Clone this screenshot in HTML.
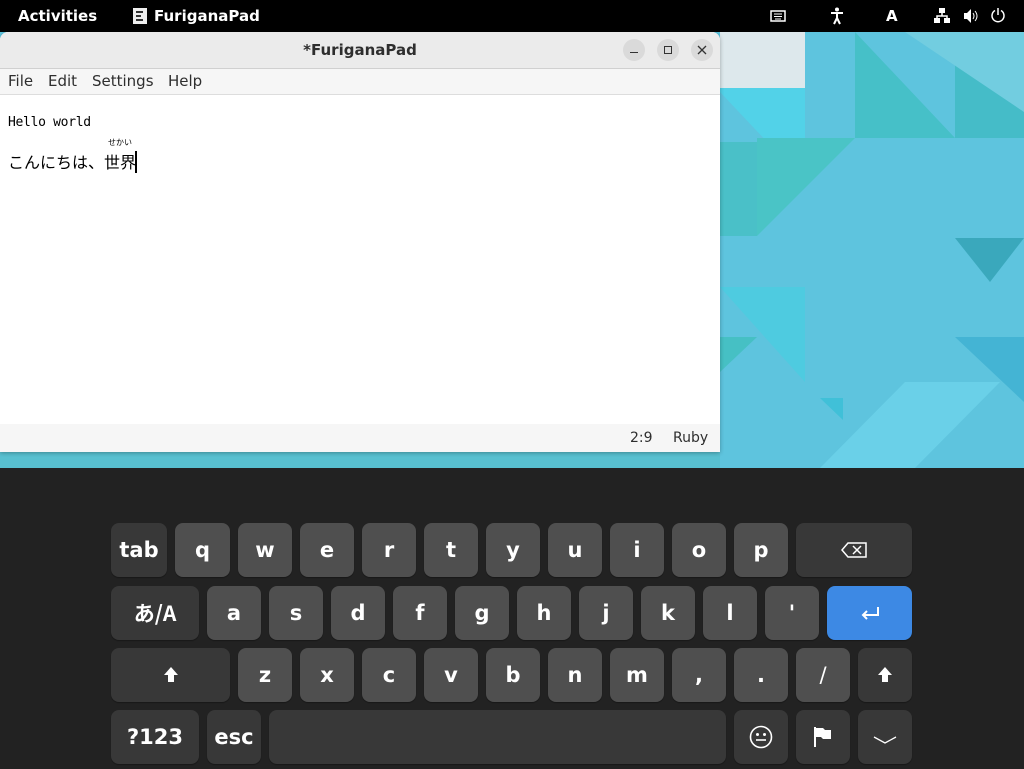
<!DOCTYPE html>
<html><head><meta charset="utf-8"><style>
*{margin:0;padding:0;box-sizing:border-box}
body{width:1024px;height:768px;overflow:hidden;background:#222;font-family:"DejaVu Sans","Liberation Sans","Noto Sans CJK JP",sans-serif;position:relative}
#top{position:absolute;left:0;top:0;width:1024px;height:32px;background:#000;color:#fff;font-weight:bold;font-size:15px}
#top span{position:absolute;top:7px}
#wall{position:absolute;left:0;top:32px;width:1024px;height:436px}
#win{position:absolute;left:0;top:32px;width:720px;height:420px;background:#fff;border-radius:8px 8px 0 0;overflow:hidden;box-shadow:0 1px 4px rgba(0,0,0,.3)}
#title{height:37px;background:#ebebeb;border-bottom:1px solid #d0d0d0;text-align:center;font-weight:bold;font-size:15px;line-height:36px;color:#2e2e2e}
.wb{position:absolute;top:7px;width:22px;height:22px;border-radius:11px;background:#dadada}
#menu{position:relative;height:26px;background:#f6f6f6;border-bottom:1px solid #ddd;font-size:15px;color:#2e2e2e;line-height:25px}
#menu span{position:absolute;top:0}
#status{position:absolute;left:0;top:392px;width:720px;height:28px;background:#f6f6f6;font-size:14px;color:#2e2e2e}
.k{position:absolute;height:54px;border-radius:8px;background:#4f4f4f;color:#fff;font-weight:bold;font-size:21px;text-align:center;line-height:54px;box-shadow:0 1px 1px rgba(0,0,0,.3)}
.s{background:#383838}
</style></head><body>
<svg id="wall" viewBox="0 0 1024 436" preserveAspectRatio="none">
<rect width="1024" height="436" fill="#5ec4de"/>
<polygon points="720,0 805,0 805,56 720,56" fill="#dde8ec"/>
<polygon points="720,56 805,56 805,150 720,60" fill="#52d2e8"/>
<polygon points="855,0 955,106 855,106" fill="#46c0c8"/>
<polygon points="955,10 1024,80 1024,106 955,106" fill="#45bcc8"/>
<polygon points="905,0 1024,0 1024,80" fill="#72cde0"/>
<polygon points="757,106 855,106 757,204" fill="#4ac4c6"/>
<polygon points="720,110 757,110 757,204 720,204" fill="#4ac0c8"/>
<polygon points="955,206 1024,206 990,250" fill="#3aa8bc"/>
<polygon points="720,255 805,255 805,350" fill="#4ecbe0"/>
<polygon points="720,305 757,305 720,340" fill="#46c0c4"/>
<polygon points="955,305 1024,305 1024,370" fill="#44b4d4"/>
<polygon points="820,436 905,350 1000,350 915,436" fill="#6ad0e8"/>
<polygon points="820,366 843,366 843,388" fill="#40c0d8"/>
<rect x="0" y="420" width="720" height="16" fill="#58c0d0"/>
</svg>
<div id="top"><span style="left:18px">Activities</span>
<svg style="position:absolute;left:133px;top:8px" width="14" height="16"><rect x="0" y="0" width="14" height="16" fill="#eee"/><path d="M3 4h7M3 8h5M3 12h7" stroke="#333" stroke-width="2"/></svg>
<span style="left:154px">FuriganaPad</span>
<svg style="position:absolute;left:770px;top:10px" width="16" height="12"><rect x="1" y="1" width="14" height="10" fill="none" stroke="#fff" stroke-width="1.5"/><path d="M4 4h8M4 6.5h8M5 9h6" stroke="#fff"/></svg>
<svg style="position:absolute;left:829px;top:7px" width="16" height="18"><circle cx="8" cy="2.5" r="2" fill="#fff"/><path d="M2 6h12M8 6v5M8 11l-3 6M8 11l3 6" stroke="#fff" stroke-width="2"/></svg>
<span style="left:886px">A</span>
<svg style="position:absolute;left:934px;top:8px" width="16" height="15"><rect x="5" y="0" width="6" height="5" fill="#fff"/><rect x="0" y="10" width="6" height="5" fill="#fff"/><rect x="10" y="10" width="6" height="5" fill="#fff"/><path d="M8 5v3M3 10V8h10v2" stroke="#fff" stroke-width="1.5" fill="none"/></svg>
<svg style="position:absolute;left:963px;top:9px" width="16" height="14"><path d="M1 4h3l4-4v14l-4-4H1z" fill="#fff"/><path d="M10 4q2 3 0 6M12 2q4 5 0 10" stroke="#fff" fill="none"/></svg>
<svg style="position:absolute;left:990px;top:7px" width="16" height="16"><path d="M5 3.5A6 6 0 1 0 11 3.5" stroke="#fff" stroke-width="1.5" fill="none"/><path d="M8 1v7" stroke="#fff" stroke-width="1.5"/></svg>
</div>
<div id="win">
<div id="title">*FuriganaPad</div>
<div class="wb" style="left:623px"><div style="position:absolute;left:7px;top:13px;width:8px;height:1px;background:#333"></div></div>
<div class="wb" style="left:657px"><div style="position:absolute;left:7px;top:7px;width:8px;height:8px;border:1px solid #333"></div></div>
<div class="wb" style="left:691px"><svg style="position:absolute;left:6px;top:6px" width="10" height="10"><path d="M1 1l8 8M9 1l-8 8" stroke="#333" stroke-width="1.3"/></svg></div>
<div id="menu"><span style="left:8px">File</span><span style="left:48px">Edit</span><span style="left:92px">Settings</span><span style="left:168px">Help</span></div>
<div style="position:absolute;left:8px;top:83px;font-family:'DejaVu Sans Mono','Liberation Mono',monospace;font-size:13px;color:#000;letter-spacing:-0.3px">Hello world</div>
<div style="position:absolute;left:108px;top:105px;font-size:8px;color:#000;font-family:'Noto Sans CJK JP',sans-serif">せかい</div>
<div style="position:absolute;left:8px;top:117px;font-size:16px;color:#000;font-family:'Noto Sans CJK JP',sans-serif">こんにちは、世界</div>
<div style="position:absolute;left:135px;top:119px;width:2px;height:22px;background:#000"></div>
<div id="status"><span style="position:absolute;left:630px;top:6px">2:9</span><span style="position:absolute;left:673px;top:6px">Ruby</span></div>
</div>
<!-- row1 -->
<div class="k s" style="left:111px;top:523px;width:56px">tab</div>
<div class="k" style="left:175px;top:523px;width:55px">q</div>
<div class="k" style="left:238px;top:523px;width:54px">w</div>
<div class="k" style="left:300px;top:523px;width:54px">e</div>
<div class="k" style="left:362px;top:523px;width:54px">r</div>
<div class="k" style="left:424px;top:523px;width:54px">t</div>
<div class="k" style="left:486px;top:523px;width:54px">y</div>
<div class="k" style="left:548px;top:523px;width:54px">u</div>
<div class="k" style="left:610px;top:523px;width:54px">i</div>
<div class="k" style="left:672px;top:523px;width:54px">o</div>
<div class="k" style="left:734px;top:523px;width:54px">p</div>
<div class="k s" style="left:796px;top:523px;width:116px"><svg style="margin-top:19px" width="26" height="16"><path d="M7 1h18v14H7L1 8z" fill="none" stroke="#fff" stroke-width="1.5"/><path d="M12 4l8 8M20 4l-8 8" stroke="#fff" stroke-width="1.5"/></svg></div>
<!-- row2 -->
<div class="k s" style="left:111px;top:586px;width:88px;font-size:21px;font-family:'Noto Sans CJK JP','DejaVu Sans',sans-serif">あ/A</div>
<div class="k" style="left:207px;top:586px;width:54px">a</div>
<div class="k" style="left:269px;top:586px;width:54px">s</div>
<div class="k" style="left:331px;top:586px;width:54px">d</div>
<div class="k" style="left:393px;top:586px;width:54px">f</div>
<div class="k" style="left:455px;top:586px;width:54px">g</div>
<div class="k" style="left:517px;top:586px;width:54px">h</div>
<div class="k" style="left:579px;top:586px;width:54px">j</div>
<div class="k" style="left:641px;top:586px;width:54px">k</div>
<div class="k" style="left:703px;top:586px;width:54px">l</div>
<div class="k" style="left:765px;top:586px;width:54px">'</div>
<div class="k" style="left:827px;top:586px;width:85px;background:#3d89e4"><svg style="margin-top:19px" width="20" height="14"><path d="M18 1v8H3M7 5L3 9l4 4" fill="none" stroke="#fff" stroke-width="2"/></svg></div>
<!-- row3 -->
<div class="k s" style="left:111px;top:648px;width:119px"><svg style="margin-top:19px" width="14" height="16"><path d="M7 0L0 8h4v7h6V8h4z" fill="#fff"/></svg></div>
<div class="k" style="left:238px;top:648px;width:54px">z</div>
<div class="k" style="left:300px;top:648px;width:54px">x</div>
<div class="k" style="left:362px;top:648px;width:54px">c</div>
<div class="k" style="left:424px;top:648px;width:54px">v</div>
<div class="k" style="left:486px;top:648px;width:54px">b</div>
<div class="k" style="left:548px;top:648px;width:54px">n</div>
<div class="k" style="left:610px;top:648px;width:54px">m</div>
<div class="k" style="left:672px;top:648px;width:54px">,</div>
<div class="k" style="left:734px;top:648px;width:54px">.</div>
<div class="k" style="left:796px;top:648px;width:54px;font-weight:normal">/</div>
<div class="k s" style="left:858px;top:648px;width:54px"><svg style="margin-top:19px" width="14" height="16"><path d="M7 0L0 8h4v7h6V8h4z" fill="#fff"/></svg></div>
<!-- row4 -->
<div class="k s" style="left:111px;top:710px;width:88px">?123</div>
<div class="k s" style="left:207px;top:710px;width:54px">esc</div>
<div class="k s" style="left:269px;top:710px;width:457px"></div>
<div class="k s" style="left:734px;top:710px;width:54px"><svg style="margin-top:15px" width="24" height="24"><circle cx="12" cy="12" r="10.5" fill="none" stroke="#fff" stroke-width="1.6"/><circle cx="8.5" cy="9.5" r="1.5" fill="#fff"/><circle cx="15.5" cy="9.5" r="1.5" fill="#fff"/><path d="M7 15h10" stroke="#fff" stroke-width="1.6"/></svg></div>
<div class="k s" style="left:796px;top:710px;width:54px"><svg style="margin-top:17px" width="18" height="20"><path d="M1 0v20" stroke="#fff" stroke-width="2"/><path d="M2 1h7l2 2h6v9h-8l-2-2H2z" fill="#fff"/></svg></div>
<div class="k s" style="left:858px;top:710px;width:54px"><svg style="margin-top:23px" width="24" height="8"><path d="M1 1l11 6 11-6" fill="none" stroke="#fff" stroke-width="1.3"/></svg></div>
</body></html>
